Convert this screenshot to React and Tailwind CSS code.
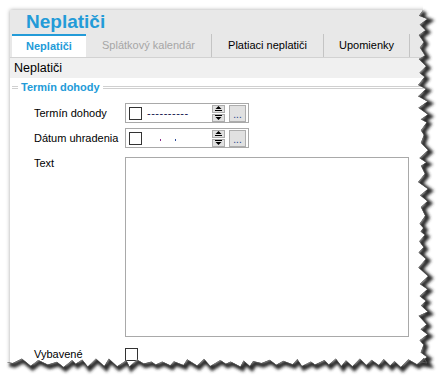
import React from 'react'

// tiny seeded random so the torn edge is the same every render
function rng(seed) {
  let s = seed
  return () => {
    s = (s * 16807) % 2147483647
    return (s - 1) / 2147483646
  }
}

function tearPoints() {
  const r = rng(11)
  const right = []
  let y = 10
  let flip = false
  while (y < 363) {
    right.push([flip ? 418 + r() * 3 : 423 + r() * 5, y])
    y += 3 + r() * 6
    flip = !flip
  }
  const bottom = []
  let x = 427
  while (x > 4) {
    bottom.push([x, flip ? 358 + r() * 4 : 363 + r() * 4])
    x -= 3 + r() * 7
    flip = !flip
  }
  return [...right, ...bottom]
}

const pts = tearPoints()
const line = 'M' + pts.map(([x, y]) => `${x.toFixed(1)} ${y.toFixed(1)}`).join(' L')
const last = pts[pts.length - 1]
const outside = `M447 0 L${pts[0][0].toFixed(1)} 0 L${pts
  .map(([x, y]) => `${x.toFixed(1)} ${y.toFixed(1)}`)
  .join(' L')} L0 ${last[1].toFixed(1)} L0 385 L447 385 Z`

function TornEdge() {
  return (
    <svg className="absolute inset-0 pointer-events-none" width="447" height="385">
      <defs>
        <clipPath id="outside">
          <path d={outside} />
        </clipPath>
        <filter id="soft" x="-10%" y="-10%" width="120%" height="120%">
          <feGaussianBlur stdDeviation="1.5" />
        </filter>
      </defs>
      <path d={outside} fill="#fff" />
      <g clipPath="url(#outside)">
        <path d={line} transform="translate(2 2)" fill="none" stroke="#2a2a2a" strokeWidth="5" filter="url(#soft)" />
        <path d={line} fill="none" stroke="#555" strokeWidth="1" />
      </g>
    </svg>
  )
}

function Checkbox() {
  return <div className="w-[13px] h-[13px] border border-[#333] bg-white shrink-0" />
}

function Spinner() {
  return (
    <div className="flex flex-col gap-[1px] w-[13px]">
      <div className="h-[8px] bg-[#e1e1e1] border border-[#adadad] flex flex-col items-center justify-center">
        <svg width="7" height="5" viewBox="0 0 7 5">
          <path d="M3.5 0 L6.5 3 L0.5 3 Z" fill="#000" />
          <rect x="0" y="4" width="7" height="1" fill="#000" />
        </svg>
      </div>
      <div className="h-[8px] bg-[#e1e1e1] border border-[#adadad] flex flex-col items-center justify-center">
        <svg width="7" height="5" viewBox="0 0 7 5">
          <rect x="0" y="0" width="7" height="1" fill="#000" />
          <path d="M0.5 2 L6.5 2 L3.5 5 Z" fill="#000" />
        </svg>
      </div>
    </div>
  )
}

function DateBox({ empty }) {
  return (
    <div className="w-[124px] h-[20px] border border-[#a9a9a9] bg-white flex items-center">
      <div className="ml-[3px]">
        <Checkbox />
      </div>
      {empty ? (
        <div className="flex items-center ml-[18px] gap-[14px]">
          <div className="w-[1px] h-[2px] bg-[#8a2a8a] mt-[4px]" />
          <div className="w-[1px] h-[2px] bg-[#2a4a9a] mt-[4px]" />
        </div>
      ) : (
        <span className="ml-[5px] text-[11px] leading-none text-[#10104a] tracking-[0.5px]">----------</span>
      )}
      <div className="ml-auto flex items-center gap-[4px] mr-[2px]">
        <Spinner />
        <div className="w-[17px] h-[17px] bg-[#e1e1e1] border border-[#adadad] flex items-end justify-center text-[10px] leading-[12px] text-[#1b3f8a]">
          ...
        </div>
      </div>
    </div>
  )
}

export default function App() {
  return (
    <div className="relative w-[447px] h-[385px] bg-white overflow-hidden font-['Liberation_Sans',Arial,sans-serif]">
      <div className="ml-[10px] mt-[10px] w-[425px] h-[362px] bg-white shadow-[0_0_4px_rgba(0,0,0,0.35)] flex flex-col">
        <div className="h-[24px] bg-[#e8e8e8] pl-[16px] text-[19px] leading-[24px] font-bold text-[#239bd8]">
          Neplatiči
        </div>
        <div className="h-[24px] bg-[#e8e8e8] border-b border-[#d2d2d2] flex text-[11px]">
          <div className="ml-[2px] w-[74px] bg-white border-t-2 border-[#239bd8] flex items-center justify-center font-bold text-[#239bd8]">
            Neplatiči
          </div>
          <div className="w-[126px] border-r border-[#c4c4c4] flex items-center justify-center text-[#a6a6a6]">
            Splátkový kalendár
          </div>
          <div className="w-[112px] border-r border-[#c4c4c4] flex items-center justify-center text-black">
            Platiaci neplatiči
          </div>
          <div className="w-[86px] border-r border-[#c4c4c4] flex items-center justify-center text-black">
            Upomienky
          </div>
        </div>
        <div className="h-[20px] bg-[#f0f0f0] pl-[4px] text-[12.5px] leading-[20px] text-black">Neplatiči</div>
        <div className="flex-1 pt-[3px]">
          <div className="h-[13px] flex items-center text-[11px] font-bold text-[#239bd8]">
            <div className="ml-[2px] w-[6px] h-[3px] border-y border-[#d0d0d0]" />
            <span className="px-[3px] leading-[13px]">Termín dohody</span>
            <div className="flex-1 h-[3px] border-y border-[#d0d0d0]" />
          </div>
          <div className="pl-[24px] text-[11px] text-black">
            <div className="mt-[9px] flex items-center">
              <div className="w-[91px]">Termín dohody</div>
              <DateBox />
            </div>
            <div className="mt-[5px] flex items-center">
              <div className="w-[91px]">Dátum uhradenia</div>
              <DateBox empty />
            </div>
            <div className="mt-[9px] flex items-start">
              <div className="w-[91px] leading-[13px]">Text</div>
              <div className="w-[284px] h-[180px] border border-[#a9a9a9] bg-white" />
            </div>
            <div className="mt-[9px] flex items-center">
              <div className="w-[91px]">Vybavené</div>
              <Checkbox />
            </div>
          </div>
        </div>
      </div>
      <TornEdge />
    </div>
  )
}
